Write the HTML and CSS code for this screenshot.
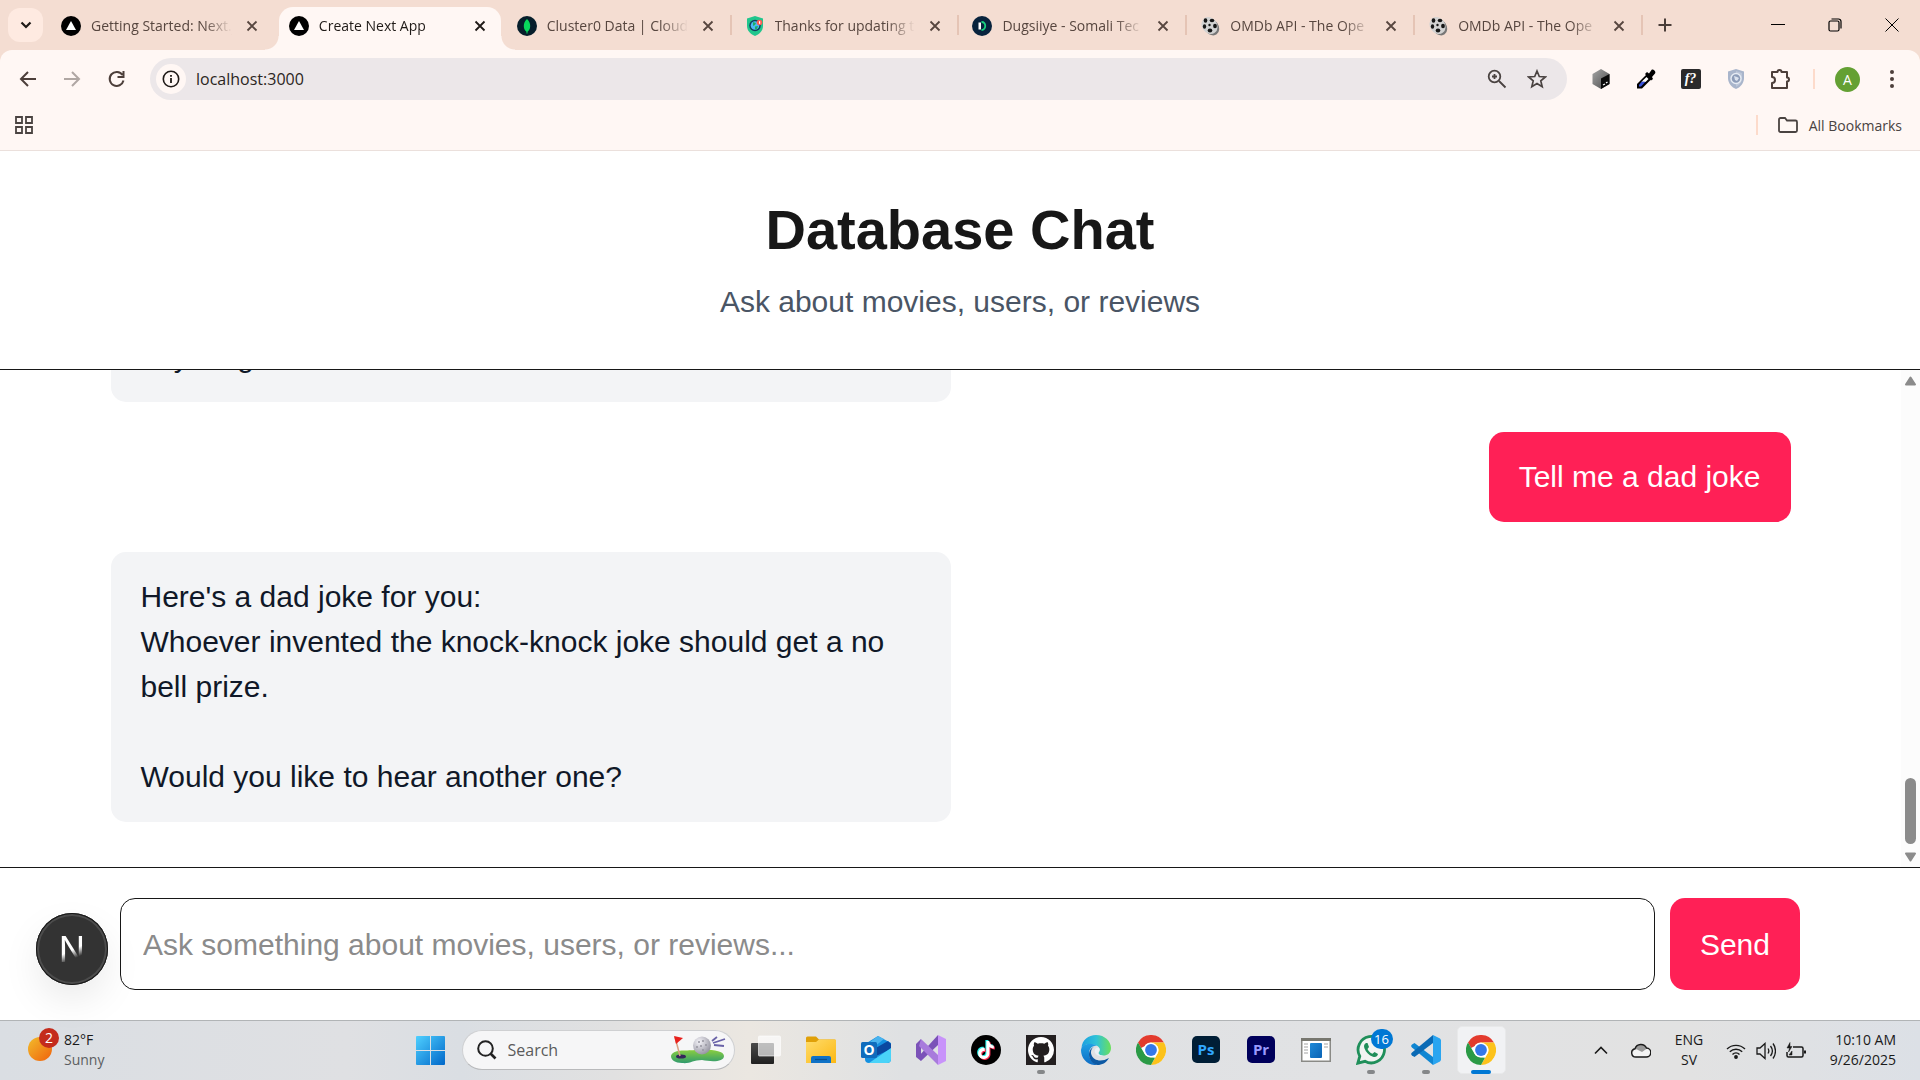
FILE: index.html
```html
<!DOCTYPE html>
<html lang="en">
<head>
<meta charset="utf-8">
<title>Create Next App</title>
<link rel="stylesheet" href="styles.css">
</head>
<body>
<svg class="defs" aria-hidden="true">
  <defs>
    <linearGradient id="win" x1="0" y1="0" x2="1" y2="1"><stop offset="0" stop-color="#4fd0ff"/><stop offset="1" stop-color="#0067c9"/></linearGradient>
    <linearGradient id="sun" x1="0" y1="0" x2="1" y2="1"><stop offset="0" stop-color="#f2bd2c"/><stop offset="1" stop-color="#f0610c"/></linearGradient>
    <linearGradient id="fold" x1="0" y1="0" x2="1" y2="1"><stop offset="0" stop-color="#ffdc6b"/><stop offset="1" stop-color="#fcb813"/></linearGradient>
    <linearGradient id="blue" x1="0" y1="0" x2="1" y2="1"><stop offset="0" stop-color="#1f8ad8"/><stop offset="1" stop-color="#0a63b5"/></linearGradient>
    <linearGradient id="edgeTop" x1="0" y1="0" x2="1" y2="0"><stop offset="0" stop-color="#1c9fe0"/><stop offset=".5" stop-color="#2fc2d8"/><stop offset="1" stop-color="#6be05a"/></linearGradient>
    <linearGradient id="edgeMid" x1="0" y1="0" x2="0" y2="1"><stop offset="0" stop-color="#1fa0e4"/><stop offset="1" stop-color="#0f6cc4"/></linearGradient>
    <radialGradient id="ball" cx=".35" cy=".3" r=".8"><stop offset="0" stop-color="#f4f3f8"/><stop offset="1" stop-color="#8d8c99"/></radialGradient>
    <linearGradient id="grass" x1="0" y1="0" x2="0" y2="1"><stop offset="0" stop-color="#8ccf3f"/><stop offset="1" stop-color="#2f9a6e"/></linearGradient>
    <linearGradient id="tv" x1="0" y1="0" x2="0" y2="1"><stop offset="0" stop-color="#4a4a4a"/><stop offset="1" stop-color="#202020"/></linearGradient>
    <linearGradient id="cube" x1="0" y1="0" x2="1" y2="1"><stop offset="0" stop-color="#a5a5a5"/><stop offset="1" stop-color="#4a4a4a"/></linearGradient>
    <symbol id="vercel" viewBox="0 0 20 20"><circle cx="10" cy="10" r="10" fill="#000"/><path d="M10 5l5 9H5z" fill="#fff"/></symbol>
    <symbol id="close" viewBox="0 0 12 12"><path d="M1.500 1.500l9 9M10.500 1.500l-9 9" stroke="currentColor" stroke-width="1.800" fill="none"/></symbol>
    <symbol id="reel" viewBox="0 0 20 20"><ellipse cx="11.500" cy="11" rx="7" ry="9" fill="#777" transform="rotate(-35 11.500 11)"/><ellipse cx="9.500" cy="9.500" rx="7.500" ry="9" fill="#d2d2d2" transform="rotate(-35 9.500 9.500)"/><g fill="#161616"><ellipse cx="5.500" cy="4.500" rx="1.800" ry="2.300"/><ellipse cx="12" cy="4.500" rx="2.300" ry="1.800"/><ellipse cx="4.500" cy="10.500" rx="1.700" ry="2.200"/><ellipse cx="10" cy="14.500" rx="2.300" ry="2"/><ellipse cx="15" cy="10" rx="1.900" ry="2.300"/><circle cx="9.500" cy="9" r="1.200"/></g></symbol>
    <symbol id="chrome" viewBox="0 0 30 30"><circle cx="15" cy="15" r="15" fill="#fff"/><path d="M2 7.500A15 15 0 0 1 28 7.500H15A7.500 7.500 0 0 0 8.500 11.250L5 13z" fill="#e33b2e"/><path d="M28 7.500A15 15 0 0 1 15 30l6.500-11.250A7.500 7.500 0 0 0 21.500 11.250L15 7.500z" fill="#fcc21b"/><path d="M15 30A15 15 0 0 1 2 7.500l6.500 11.250A7.500 7.500 0 0 0 15 22.500l4 .300z" fill="#2b9a46"/><circle cx="15" cy="15" r="7.300" fill="#fff"/><circle cx="15" cy="15" r="5.900" fill="#3478e8"/></symbol>
    <symbol id="tiktok" viewBox="0 0 24 24"><path d="M12.525.02c1.310-.02 2.610-.01 3.910-.02.08 1.530.63 3.090 1.750 4.170 1.120 1.110 2.700 1.620 4.240 1.790v4.030c-1.440-.05-2.890-.35-4.200-.97-.57-.26-1.100-.59-1.620-.93-.01 2.920.01 5.840-.02 8.750-.08 1.400-.54 2.790-1.350 3.940-1.310 1.920-3.580 3.170-5.910 3.210-1.430.08-2.860-.31-4.080-1.030-2.020-1.190-3.440-3.370-3.650-5.710-.02-.5-.03-1-.01-1.490.18-1.900 1.120-3.720 2.580-4.960 1.660-1.440 3.980-2.130 6.150-1.720.02 1.480-.04 2.960-.04 4.440-.99-.32-2.150-.23-3.020.37-.63.41-1.110 1.040-1.360 1.750-.21.51-.15 1.070-.14 1.610.24 1.640 1.820 3.020 3.500 2.870 1.120-.01 2.190-.66 2.770-1.610.19-.33.4-.67.41-1.060.1-1.790.06-3.570.07-5.360.01-4.030-.01-8.050.02-12.070z"/></symbol>
  </defs>
</svg>

<header class="browser">
  <div class="tabstrip">
    <button class="tab-search" aria-label="Search tabs"><svg width="12" height="8" viewBox="0 0 12 8"><path d="M1.500 1.500L6 6l4.500-4.500" fill="none" stroke="#1f1a17" stroke-width="2.200"/></svg></button>
    <nav class="tabs">
      <div class="tab no-line"><svg class="fav"><use href="#vercel"/></svg><a href="#">Getting Started: Next.js</a><button aria-label="Close tab"><svg><use href="#close"/></svg></button></div>
      <div class="tab active"><svg class="fav"><use href="#vercel"/></svg><a href="#">Create Next App</a><button aria-label="Close tab"><svg><use href="#close"/></svg></button></div>
      <div class="tab"><svg class="fav" viewBox="0 0 20 20"><circle cx="10" cy="10" r="10" fill="#061e2b"/><path d="M10 3c2.500 2.500 3.200 4.500 3.200 7 0 3-1.200 4.500-2.700 5.700V17.500h-1v-1.800C8 14.500 6.800 13 6.800 10c0-2.500.7-4.500 3.200-7z" fill="#08d85c"/></svg><a href="#">Cluster0 Data | Cloud</a><button aria-label="Close tab"><svg><use href="#close"/></svg></button></div>
      <div class="tab"><svg class="fav" viewBox="0 0 20 20"><path d="M10 0l8 2.500V10c0 5-4 8.500-8 10-4-1.500-8-5-8-10V2.500z" fill="#21c68d"/><circle cx="10" cy="9.500" r="5.800" fill="#103f5e"/><circle cx="10" cy="9.500" r="4.300" fill="#4db8f5"/><path d="M8 6l3 1-1 2-2 1zM10 10.500l3-.500-1 3-2 .500z" fill="#1cae67"/><circle cx="14.500" cy="6.500" r="2.800" fill="#ff5a52"/><rect x="14" y="5.200" width="1.200" height="2.600" fill="#fff"/></svg><a href="#">Thanks for updating t</a><button aria-label="Close tab"><svg><use href="#close"/></svg></button></div>
      <div class="tab"><svg class="fav" viewBox="0 0 20 20"><circle cx="10" cy="10" r="10" fill="#08233d"/><rect x="6.500" y="6.500" width="2.500" height="7" fill="#fff"/><path d="M9.500 6c5-.300 5 8 0 8" fill="none" stroke="#19d07f" stroke-width="1.800"/></svg><a href="#">Dugsiiye - Somali Tec</a><button aria-label="Close tab"><svg><use href="#close"/></svg></button></div>
      <div class="tab"><svg class="fav"><use href="#reel"/></svg><a href="#">OMDb API - The Ope</a><button aria-label="Close tab"><svg><use href="#close"/></svg></button></div>
      <div class="tab"><svg class="fav"><use href="#reel"/></svg><a href="#">OMDb API - The Ope</a><button aria-label="Close tab"><svg><use href="#close"/></svg></button></div>
    </nav>
    <button class="new-tab" aria-label="New tab"><svg width="14" height="14" viewBox="0 0 14 14"><path d="M7 .500v13M.500 7h13" stroke="#4a3d38" stroke-width="2"/></svg></button>
    <div class="window-buttons">
      <button aria-label="Minimize"><svg width="14" height="14" viewBox="0 0 14 14"><path d="M0 6.500h14" stroke="#000"/></svg></button>
      <button aria-label="Restore"><svg width="14" height="14" viewBox="0 0 14 14" fill="none" stroke="#000" stroke-width="1.200"><rect x="1" y="3" width="10" height="10" rx="1.500"/><path d="M3.500 1h7A2.500 2.500 0 0 1 13 3.500v7"/></svg></button>
      <button aria-label="Close"><svg width="14" height="14" viewBox="0 0 14 14"><path d="M.500.500l13 13M13.500.500l-13 13" stroke="#000"/></svg></button>
    </div>
  </div>
  <div class="chrome-body">
    <div class="toolbar">
      <div class="nav-buttons">
        <button aria-label="Back"><svg width="18" height="18" viewBox="0 0 18 18" fill="none" stroke="#4d3f3a" stroke-width="2"><path d="M17 9H2.500M9 2L2 9l7 7"/></svg></button>
        <button aria-label="Forward"><svg width="18" height="18" viewBox="0 0 18 18" fill="none" stroke="#b0a7a3" stroke-width="2"><path d="M1 9h14.500M9 2l7 7-7 7"/></svg></button>
        <button aria-label="Reload"><svg width="18" height="18" viewBox="0 0 18 18" fill="none" stroke="#4d3f3a" stroke-width="2"><path d="M15.500 5A7 7 0 1 0 16.500 10.500M16.500 1v6h-6"/></svg></button>
      </div>
      <div class="omnibox">
        <button class="site-info" aria-label="Site information"><svg width="18" height="18" viewBox="0 0 18 18"><circle cx="9" cy="9" r="7.700" fill="none" stroke="#1f1a17" stroke-width="1.600"/><path d="M9 8v5M9 5v1.800" stroke="#1f1a17" stroke-width="1.800"/></svg></button>
        <input type="text" value="localhost:3000" aria-label="Address">
        <button aria-label="Zoom"><svg width="20" height="20" viewBox="0 0 20 20" fill="none" stroke="#4a4341" stroke-width="1.800"><circle cx="7.500" cy="7.500" r="5.800"/><path d="M12 12l6.500 6.500M7.500 5v5M5 7.500h5"/></svg></button>
        <button aria-label="Bookmark this tab"><svg width="20" height="20" viewBox="0 0 20 20"><path d="M10 2l2.300 5.500 6 .500-4.500 3.900 1.400 5.800L10 14.600l-5.200 3.100 1.400-5.800L1.700 8l6-.500z" fill="none" stroke="#4a4341" stroke-width="1.700"/></svg></button>
      </div>
      <div class="extensions">
        <button aria-label="Cube extension"><svg width="20" height="20" viewBox="0 0 20 20"><path d="M10 0l8.500 5v10L10 20l-8.500-5V5z" fill="url(#cube)"/><path d="M10 9.500L18.500 5v10L10 20z" fill="#0a0a0a"/><path d="M12 16l2-1M15 14l1.500-1" stroke="#fff" stroke-width="1.300"/></svg></button>
        <button aria-label="Color picker extension"><svg width="20" height="20" viewBox="0 0 20 20"><path d="M10.500 5.500l5 4.500L6 19.500H1V15z" fill="#000"/><path d="M10.500 8l2 2-3 3-4-.200z" fill="#fff"/><path d="M5.500 12.800h4L5 17.500H3V16z" fill="#3850d8"/><path d="M9 5l2-2 2 1.500L15.500 1c1.500-1.500 5 1.500 3.500 3.500L16 8l1 2-2 1.500z" fill="#000"/></svg></button>
        <button aria-label="Font extension"><span class="font-ext">f?</span></button>
        <button aria-label="Shield extension"><svg width="20" height="20" viewBox="0 0 20 20"><path d="M10 0l8 2.500V9c0 5.500-4 9.500-8 11-4-1.500-8-5.500-8-11V2.500z" fill="#a9b5cb"/><path d="M10 2l6 2v5c0 4.500-3 7.500-6 8.800" fill="#bcc6d8"/><circle cx="10" cy="9.500" r="5" fill="#8d9cb8" stroke="#e6ebf3" stroke-width="1.400"/><path d="M8 7l3 1 2 1-2 3-2-1z" fill="#dbe2ee"/></svg></button>
        <button aria-label="Extensions"><svg width="22" height="22" viewBox="0 0 22 22"><path d="M2 4h5.500a2 2 0 0 1 4 0H17v5.500a2 2 0 0 1 0 4V20H2v-5a3 3 0 0 0 0-6z" fill="none" stroke="#4d3f3a" stroke-width="2" stroke-linejoin="round"/></svg></button>
      </div>
      <span class="divider"></span>
      <button class="avatar" aria-label="Profile">A</button>
      <button class="menu" aria-label="Menu"><svg width="4" height="18" viewBox="0 0 4 18" fill="#4d3f3a"><circle cx="2" cy="2" r="2"/><circle cx="2" cy="9" r="2"/><circle cx="2" cy="16" r="2"/></svg></button>
    </div>
    <div class="bookmarks">
      <button aria-label="Apps"><svg width="18" height="18" viewBox="0 0 18 18" fill="none" stroke="#4a4341" stroke-width="1.800"><path d="M1 1h6v6H1zM11 1h6v6h-6zM1 11h6v6H1zM11 11h6v6h-6z"/></svg></button>
      <div class="all-bookmarks"><span class="divider"></span>
      <button><svg width="20" height="16" viewBox="0 0 20 16"><path d="M1 2.500A1.500 1.500 0 0 1 2.500 1H7l2 2.500h8.500A1.500 1.500 0 0 1 19 5v8.500a1.500 1.500 0 0 1-1.500 1.500h-15A1.500 1.500 0 0 1 1 13.500z" fill="none" stroke="#4a4341" stroke-width="1.800"/></svg>All Bookmarks</button></div>
    </div>
  </div>
</header>

<main class="app">
  <div class="hero">
    <h1>Database Chat</h1>
    <p>Ask about movies, users, or reviews</p>
  </div>
  <div class="chat">
    <div class="scroll-area">
      <div class="messages">
        <p class="bubble bot">anything</p>
        <p class="bubble user">Tell me a dad joke</p>
        <p class="bubble bot">Here's a dad joke for you:<br>Whoever invented the knock-knock joke should get a no bell prize.<br><br>Would you like to hear another one?</p>
      </div>
    </div>
    <div class="scrollbar" aria-hidden="true">
      <svg width="13" height="10" viewBox="0 0 13 10"><path d="M6.500 1.500l4.500 7h-9z" fill="#8b8b8b" stroke="#8b8b8b" stroke-width="2" stroke-linejoin="round"/></svg>
      <span class="thumb"></span>
      <svg width="13" height="10" viewBox="0 0 13 10"><path d="M6.500 8.500l4.500-7h-9z" fill="#8b8b8b" stroke="#8b8b8b" stroke-width="2" stroke-linejoin="round"/></svg>
    </div>
  </div>
  <form class="composer">
    <div class="composer-row">
      <input type="text" placeholder="Ask something about movies, users, or reviews..." aria-label="Message">
      <button type="button">Send</button>
    </div>
    <button type="button" class="next-badge" aria-label="Next.js dev tools"><span>N</span></button>
  </form>
</main>

<footer class="taskbar">
  <div class="weather">
    <span class="weather-icon"><svg width="24" height="24" viewBox="0 0 24 24"><circle cx="12" cy="12" r="12" fill="url(#sun)"/></svg><b>2</b></span>
    <span class="two-line"><span>82°F</span><span class="muted">Sunny</span></span>
  </div>
  <div class="dock">
    <button class="slot" aria-label="Start"><svg width="29" height="29" viewBox="0 0 29 29"><path d="M1 0h13v14H0V1a1 1 0 0 1 1-1zM15 0h13a1 1 0 0 1 1 1v13H15zM0 15h14v14H1a1 1 0 0 1-1-1zM15 15h14v13a1 1 0 0 1-1 1H15z" fill="url(#win)"/></svg></button>
    <label class="search">
      <svg width="20" height="20" viewBox="0 0 20 20" fill="none" stroke="#222" stroke-width="2"><circle cx="8.500" cy="8.500" r="7.300"/><path d="M13.500 13.500l5 5" stroke-width="2.600"/></svg>
      <input type="text" placeholder="Search" aria-label="Search">
      <svg width="56" height="28" viewBox="0 0 56 28"><path d="M1 20c2-7 14-5 24-6 14-1 29 0 29 6s-12 6-22 4c-9 0-12 4-20 3-7 0-11-3-11-7z" fill="url(#grass)"/><ellipse cx="11" cy="20.500" rx="5" ry="2" fill="#35265a"/><path d="M5 1l5 19" stroke="#d9a184" stroke-width="1.500"/><path d="M4 0l9 2-7 6z" fill="#e8211e"/><circle cx="32" cy="9.500" r="9" fill="url(#ball)"/><g fill="#96959f"><circle cx="29" cy="6" r="1"/><circle cx="33" cy="5" r="1"/><circle cx="31" cy="10" r="1"/><circle cx="36" cy="9" r="1"/><circle cx="33" cy="14" r="1"/><circle cx="27" cy="11" r="1"/></g><path d="M42 5l5-4M43 7l12-4M44 9l10 1" stroke="#6a63a8" stroke-width="1.800"/></svg>
    </label>
    <div class="apps">
      <button class="slot" aria-label="Task view"><svg width="30" height="30" viewBox="0 0 30 30"><rect y="8" width="23" height="21" rx="1" fill="url(#tv)"/><rect x="7.500" y="1" width="22" height="20" rx="1" fill="#fff" fill-opacity=".65" stroke="#fff" stroke-opacity=".6"/></svg></button>
      <button class="slot" aria-label="File Explorer"><svg width="30" height="28" viewBox="0 0 30 28"><path d="M0 2a1.500 1.500 0 0 1 1.500-1.500H10L13 3.500H28.500A1.500 1.500 0 0 1 30 5v5H0z" fill="#e0a008"/><path d="M0 6h10l3-2.500h16A1 1 0 0 1 30 4.500V27H0z" fill="url(#fold)"/><path d="M5 27v-5a2 2 0 0 1 2-2h16a2 2 0 0 1 2 2v5z" fill="#1072c6"/><path d="M9 23.500h12" stroke="#09508f" stroke-width="1.200"/></svg></button>
      <button class="slot" aria-label="Outlook"><svg width="30" height="28" viewBox="0 0 30 28"><path d="M4 8L17 0l13 7v16a4 4 0 0 1-4 4H8a4 4 0 0 1-4-4z" fill="#1590e0"/><path d="M5 9l12-9 6 3L8 15z" fill="#4ab3ee"/><path d="M13 13l14-8 3 3v5l-17 8z" fill="#0b48a0"/><path d="M30 12v11a4 4 0 0 1-4 4H8z" fill="#4ad3f8"/><rect y="6" width="16" height="16" rx="1.500" fill="#0f6cbd"/><text x="8" y="19" text-anchor="middle" font-family="Open Sans, sans-serif" font-weight="700" font-size="14" fill="#fff">O</text></svg></button>
      <button class="slot" aria-label="Visual Studio"><svg width="30" height="30" viewBox="0 0 30 30"><path d="M0 9l5-5v22l-5-4z" fill="#7b52b8"/><path d="M22 0v10L5 26l-2-5z" fill="#7b52b8"/><path d="M5 4l17 16v10L3 11z" fill="#a87bdc"/><path d="M22 0l8 4v22l-8 4z" fill="#c893fa"/></svg></button>
      <button class="slot" aria-label="TikTok"><svg width="30" height="30" viewBox="0 0 30 30"><circle cx="15" cy="15" r="15" fill="#000"/><use href="#tiktok" x="5" y="5" width="18" height="18" fill="#25f4ee"/><use href="#tiktok" x="7" y="7" width="18" height="18" fill="#fe2c55"/><use href="#tiktok" x="6" y="6" width="18" height="18" fill="#fff"/></svg></button>
      <button class="slot running" aria-label="GitHub"><svg width="30" height="30" viewBox="0 0 30 30"><path d="M0 0h30v30H0z" fill="#231f20"/><path transform="translate(2 2) scale(1.625)" fill="#fff" d="M8 0C3.580 0 0 3.580 0 8c0 3.540 2.290 6.530 5.470 7.590.4.07.55-.17.55-.38 0-.19-.01-.82-.01-1.490-2.010.37-2.530-.49-2.690-.94-.09-.23-.48-.94-.82-1.130-.28-.15-.68-.52-.01-.53.63-.01 1.080.58 1.230.82.72 1.210 1.870.87 2.330.66.07-.52.28-.87.51-1.070-1.780-.2-3.640-.89-3.640-3.950 0-.87.31-1.590.82-2.150-.08-.2-.36-1.020.08-2.120 0 0 .67-.21 2.200.82.64-.18 1.320-.27 2-.27.68 0 1.360.09 2 .27 1.530-1.040 2.200-.82 2.200-.82.44 1.100.16 1.920.08 2.120.51.56.82 1.270.82 2.150 0 3.070-1.870 3.750-3.650 3.950.29.25.54.73.54 1.480 0 1.070-.01 1.930-.01 2.200 0 .21.15.46.55.38A8.013 8.013 0 0 0 16 8c0-4.420-3.580-8-8-8z"/></svg></button>
      <button class="slot" aria-label="Edge"><svg width="30" height="30" viewBox="0 0 30 30"><path d="M.500 13C1 5 7.500 0 15 0c9 0 15 6.500 15 13 0 5-3.500 7.500-7.500 7.500-4 0-5.500-1.500-5-3 1.800-2 1.500-5-1-6.500C11 8 4 8 .500 13z" fill="url(#edgeTop)"/><path d="M0 15C1 8 11 7 16 11c-5-1-8 3-8 8 0 5 4 10 9 11C7 31 0 24 0 15z" fill="url(#edgeMid)"/><path d="M16 11c-5 0-7 5-5.500 9 2 5.500 9.500 7.500 17.500 3-3 5-7 7-11.500 7C11 29 8 24 8 19.500c0-4 3-8.500 8-8.500z" fill="#0c59a4"/><path d="M18.500 13.500c-3-2-5.500 1-4.500 4 1 3 5 4.500 8.500 3-4 0-5.500-1.500-5-3 1-1 1.500-2.500 1-4z" fill="#eaf0f5"/></svg></button>
      <button class="slot" aria-label="Chrome"><svg width="30" height="30"><use href="#chrome"/></svg></button>
      <button class="slot" aria-label="Photoshop"><span class="adobe ps">Ps</span></button>
      <button class="slot" aria-label="Premiere Pro"><span class="adobe pr">Pr</span></button>
      <button class="slot" aria-label="Window"><svg width="30" height="24" viewBox="0 0 30 24"><rect x=".75" y=".75" width="28.500" height="22.500" fill="#fff" stroke="#8a8a86" stroke-width="1.500"/><path d="M0 0h30v3H0z" fill="#77776f"/><rect x="9" y="5" width="12" height="15" rx="1" fill="url(#blue)"/><path d="M3 6h4M3 9h4M3 12h4M3 15h4M23 6h4M23 9h4" stroke="#a2a2a2"/></svg></button>
      <button class="slot running" aria-label="WhatsApp"><svg width="30" height="30" viewBox="0 0 30 30"><path d="M1.800 28.200l2-7A13.200 13.200 0 1 1 9 26.300z" fill="#f1f4f2" stroke="#1f8f5a" stroke-width="2.800"/><path d="M10 8c-2 1-2.500 3-1.500 5.500 1.500 3.800 4.500 7 8.500 8.300 2.500.700 4.500-.300 5-2.800l-3.500-2-2 1.800c-2.500-1-4-2.600-5-4.800l1.500-2L11.500 8z" fill="#1f8f5a"/></svg><span class="count">16</span></button>
      <button class="slot running" aria-label="VS Code"><svg width="30" height="30" viewBox="0 0 30 30"><path d="M1 9.500L3.500 8 22 22v8L1 12.500a2 2 0 0 1 0-3z" fill="#0f86d2"/><path d="M22 0v8L3.500 22 1 20.500a2 2 0 0 1 0-3z" fill="#0a6ab5"/><path d="M22 0l7 3.500 1 1.500v20l-1 1.500-7 3.500z" fill="#2aa5f0"/></svg></button>
      <button class="slot current" aria-label="Chrome, active"><svg width="30" height="30"><use href="#chrome"/></svg></button>
    </div>
  </div>
  <div class="tray">
    <svg width="14" height="9" viewBox="0 0 14 9"><path d="M1 7.500l6-6 6 6" fill="none" stroke="#1a1a1a" stroke-width="1.600"/></svg>
    <svg class="cloud" width="20" height="15" viewBox="0 0 20 15"><path d="M5 14a4.200 4.200 0 0 1-1-8.300A6.200 6.200 0 0 1 15.500 5 4.500 4.500 0 0 1 15 14z" fill="#f4f4f4"/><path d="M1.500 10C3 5 6 6 7 7l4 2 5-3.500C14 0 6 0 4.500 5.500 2 6.500 1 8 1.500 10z" fill="#9a9a9a"/><path d="M5 14a4.200 4.200 0 0 1-1-8.300A6.200 6.200 0 0 1 15.500 5 4.500 4.500 0 0 1 15 14z" fill="none" stroke="#1a1a1a" stroke-width="1.400"/></svg>
    <span class="two-line lang"><span>ENG</span><span>SV</span></span>
    <span class="status">
      <svg width="20" height="16" viewBox="0 0 20 16" fill="none" stroke="#1a1a1a" stroke-width="1.400"><path d="M1 6a13 13 0 0 1 18 0M3.800 8.800a9 9 0 0 1 12.400 0M6.500 11.500a5 5 0 0 1 7 0"/><circle cx="10" cy="14" r="1.200" fill="#1a1a1a"/></svg>
      <svg width="20" height="18" viewBox="0 0 20 18" fill="none" stroke="#1a1a1a" stroke-width="1.300"><path d="M1 6h3l5-4.500v15L4 12H1zM12 6.500c1 1.500 1 3.500 0 5M14.500 4c2.300 3 2.300 7 0 10M17 1.500c3.300 4.500 3.300 10.500 0 15"/></svg>
      <svg width="20" height="18" viewBox="0 0 20 18" fill="none" stroke="#1a1a1a" stroke-width="1.500"><path d="M7 5h8.500A1.500 1.500 0 0 1 17 6.500v7a1.500 1.500 0 0 1-1.500 1.500h-13A1.500 1.500 0 0 1 1 13.500V10"/><path d="M19 8.500v3" stroke-width="2"/><path d="M4 .500L1 6h2.500L2.500 10 6 4.500H4zM3 13l3-4v4z" fill="#1a1a1a" stroke-width=".5"/></svg>
    </span>
    <span class="two-line clock"><span>10:10 AM</span><span>9/26/2025</span></span>
  </div>
</footer>
</body>
</html>
```
FILE: styles.css
```css
* { box-sizing: border-box; }

body {
  margin: 0;
  height: 100vh;
  display: flex;
  flex-direction: column;
  overflow: hidden;
  background: #fff;
  font-family: "Liberation Sans", Arial, sans-serif;
}

button, input { font: inherit; color: inherit; border: 0; padding: 0; background: none; outline: 0; }
a { color: inherit; text-decoration: none; }
svg { display: block; flex: none; }
.defs { position: absolute; width: 0; height: 0; }

/* Browser frame */
.browser { background: #f4ddd2; font-family: "Open Sans", "Noto Sans", sans-serif; }
.browser button { display: flex; align-items: center; justify-content: center; }

.tabstrip { display: flex; height: 50px; padding-left: 8px; }
.tab-search { width: 35px; height: 34px; margin-top: 8px; border-radius: 12px; background: #feeae1; }
.tabs { flex: 1; display: grid; grid-template-columns: repeat(7, minmax(0, 1fr)); min-width: 0; padding-left: 5px; }
.tab {
  position: relative;
  min-width: 0;
  display: flex;
  align-items: center;
  margin-top: 7px;
  padding: 0 18px 6px 13px;
  font-size: 14px;
  line-height: 20px;
  color: #57463f;
}
.tab .fav { width: 20px; height: 20px; margin-right: 10px; }
.tab a {
  flex: 1;
  overflow: hidden;
  white-space: nowrap;
  -webkit-mask-image: linear-gradient(to right, #000 calc(100% - 28px), transparent);
  mask-image: linear-gradient(to right, #000 calc(100% - 28px), transparent);
}
.tab button { width: 12px; height: 12px; margin-left: 14px; }
.tab button svg { width: 12px; height: 12px; }
.tab:not(.active):not(.no-line)::after {
  content: "";
  position: absolute;
  right: 0;
  top: 8px;
  width: 2px;
  height: 20px;
  background: #e5c4b5;
}
.tab.active {
  margin-left: 3px;
  margin-right: 3px;
  padding: 0 15px 6px 10px;
  background: #fff7f4;
  border-radius: 14px 14px 0 0;
  color: #1f1a17;
}
.tab.active::before, .tab.active::after {
  content: "";
  position: absolute;
  bottom: 0;
  width: 14px;
  height: 14px;
}
.tab.active::before { left: -14px; background: radial-gradient(circle at 0 0, transparent 13px, #fff7f4 14px); }
.tab.active::after { right: -14px; background: radial-gradient(circle at 100% 0, transparent 13px, #fff7f4 14px); }
.new-tab { width: 44px; }
.window-buttons { display: flex; padding-left: 62px; }
.window-buttons button { width: 57px; height: 49px; }

.chrome-body { background: #fff7f4; border-radius: 12px 12px 0 0; border-bottom: 1px solid #ebe0dc; }
.toolbar { display: flex; align-items: center; height: 58px; padding-right: 14px; }
.nav-buttons { display: flex; width: 150px; padding-left: 6px; }
.nav-buttons button { width: 44px; height: 42px; }
.omnibox { flex: 1; display: flex; align-items: center; height: 42px; padding: 0 10px 0 6px; border-radius: 21px; background: #ece7e9; }
.omnibox button { width: 40px; height: 40px; }
.omnibox .site-info { width: 30px; height: 30px; border-radius: 50%; background: #fff7f4; }
.omnibox input { flex: 1; min-width: 0; margin-left: 10px; font-size: 16px; color: #2b2522; }
.extensions { display: flex; padding-left: 11px; }
.extensions button { width: 45px; height: 42px; }
.font-ext { width: 20px; height: 20px; border-radius: 2px; background: #2b2a2b; color: #fff; font: italic 700 14px/20px "Liberation Serif", serif; }
.divider { width: 2px; height: 20px; background: #fddbcb; }
.extensions + .divider { margin-left: 10px; }
.browser .avatar { width: 25px; height: 25px; margin-left: 20px; border-radius: 50%; background: #64a033; color: #fff; font-size: 14px; }
.browser .menu { width: 28px; height: 40px; margin-left: 18px; }

.bookmarks { display: flex; align-items: center; justify-content: space-between; height: 42px; padding: 0 18px 8px 15px; }
.all-bookmarks { display: flex; align-items: center; gap: 20px; }
.all-bookmarks button { gap: 11px; font-size: 14px; color: #4a4341; }

/* Chat app */
.app { flex: 1; display: flex; flex-direction: column; min-height: 0; color: #171717; font-size: 30px; line-height: 45px; }
.hero { padding: 45px; border-bottom: 1px solid #171717; text-align: center; }
.hero h1 { margin: 0; font-size: 56px; line-height: 68px; font-weight: 700; }
.hero p { margin: 15px 0 0; color: #4a5565; }

.chat { flex: 1; display: flex; min-height: 0; }
.scroll-area { flex: 1; display: flex; flex-direction: column; justify-content: flex-end; overflow: hidden; padding: 45px; }
.messages { display: flex; flex-direction: column; gap: 30px; width: 100%; max-width: 1680px; margin: 0 auto; }
.bubble { margin: 0; padding: 22px 30px 23px; border-radius: 15px; }
.bubble.bot { width: 50%; background: #f3f4f6; color: #101828; }
.bubble.user { align-self: flex-end; background: #ff2056; color: #fff; }
.scrollbar { display: flex; flex-direction: column; align-items: center; width: 19px; padding: 6px 0 5px; background: #fcfcfc; }
.thumb { width: 11px; height: 66px; margin: auto 0 8px; border-radius: 6px; background: #8b8b8b; }

.composer { position: relative; padding: 30px; border-top: 1px solid #171717; }
.composer-row { display: flex; gap: 15px; max-width: 1680px; margin: 0 auto; }
.composer input { flex: 1; min-width: 0; height: 92px; padding: 2px 22px 0; border: 1px solid #171717; border-radius: 15px; }
.composer input::placeholder { color: #8b8b8b; opacity: 1; }
.composer-row button { padding: 0 30px; border-radius: 15px; background: #ff2056; color: #fff; }
.next-badge {
  position: absolute;
  left: 36px;
  bottom: 35px;
  width: 72px;
  height: 72px;
  border-radius: 50%;
  background: #333;
  box-shadow: inset 0 0 0 1px #171717, inset 0 0 0 3px #4c4c4c, 0 16px 40px -4px rgba(0, 0, 0, .1);
}
.next-badge span {
  font: 400 35px/72px Inter, sans-serif;
  color: transparent;
  background: linear-gradient(155deg, #fff 52%, transparent 70%);
  -webkit-background-clip: text;
  background-clip: text;
}

/* Taskbar */
.taskbar {
  display: grid;
  grid-template-columns: 1fr auto 1fr;
  align-items: center;
  height: 60px;
  border-top: 1px solid #b1b4b6;
  background: linear-gradient(to right, #dadee3 0%, #dfe0e3 18%, #dadee3 24%, #e1e1e1 32%, #ebe7e1 39%, #dfe1e3 47%, #e1e2e4 70%, #e2e2e2 88%, #dce0e6 100%);
  font-family: "Open Sans", "Noto Sans", sans-serif;
  font-size: 14px;
  line-height: 20px;
  color: #1a1a1a;
}
.two-line { display: flex; flex-direction: column; padding-bottom: 2px; }
.muted { color: #5b5e61; }
.weather { display: flex; align-items: center; gap: 12px; padding-left: 28px; }
.weather-icon { position: relative; }
.weather-icon svg { margin-bottom: 3px; }
.weather-icon b {
  position: absolute;
  left: 11px;
  top: -9px;
  width: 20px;
  height: 20px;
  border-radius: 50%;
  background: #c42b1c;
  color: #fff;
  font-weight: 400;
  text-align: center;
}
.dock { display: flex; align-items: center; gap: 4px; padding: 0 9px 1px 0; }
.apps { display: flex; }
.slot { position: relative; display: flex; align-items: center; justify-content: center; width: 55px; height: 48px; }
.search { display: flex; align-items: center; width: 273px; height: 40px; padding: 0 8px 0 14px; border: 1px solid #cfd0d2; border-bottom-color: #b9babc; border-radius: 20px; background: #f6f6f7; }
.search input { flex: 1; min-width: 0; margin-left: 11px; font-size: 16px; }
.search input::placeholder { color: #5b5b5b; opacity: 1; }
.running::after, .current::after {
  content: "";
  position: absolute;
  bottom: 0;
  width: 8px;
  height: 4px;
  border-radius: 2px;
  background: #858789;
}
.current::before { content: ""; position: absolute; inset: 0 3px; border: 1px solid #e8e9ea; border-radius: 5px; background: #f1f2f4; }
.current svg { position: relative; }
.current::after { width: 20px; background: #0078d4; }
.adobe { width: 28px; height: 27px; margin-bottom: 2px; border-radius: 5px; font-size: 15px; line-height: 26px; font-weight: 700; }
.ps { background: #001e36; color: #31a8ff; }
.pr { background: #00005b; color: #9999ff; }
.count { position: absolute; right: 6px; top: 3px; width: 22px; height: 20px; border-radius: 10px; background: #0078d4; color: #fff; font-size: 13px; line-height: 20px; text-align: center; }
.tray { display: flex; align-items: center; justify-content: flex-end; padding-right: 24px; }
.cloud { margin-left: 23px; }
.lang { width: 48px; margin-left: 14px; align-items: center; }
.status { display: flex; align-items: center; gap: 10px; margin-left: 13px; }
.clock { width: 90px; align-items: flex-end; }
```
